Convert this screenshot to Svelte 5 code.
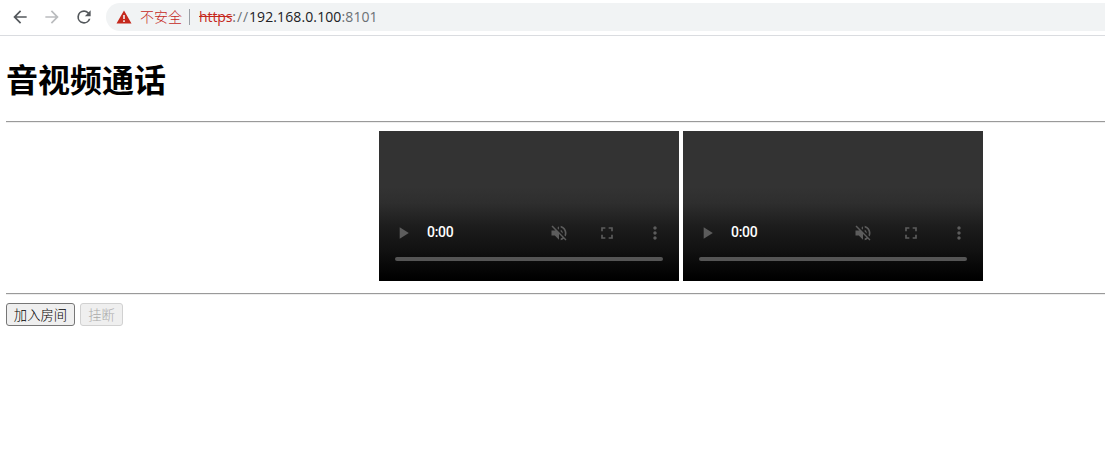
<script>
  const players = ['local', 'remote'];
</script>

<header class="toolbar">
  <nav>
    <svg viewBox="0 0 24 24"><path d="M20 11H7.83l5.59-5.59L12 4l-8 8 8 8 1.41-1.41L7.83 13H20v-2z" /></svg>
    <svg class="off" viewBox="0 0 24 24"><path d="M12 4l-1.41 1.41L16.17 11H4v2h12.17l-5.58 5.59L12 20l8-8z" /></svg>
    <svg viewBox="0 0 24 24"><path d="M17.65 6.35A7.96 7.96 0 0 0 12 4a8 8 0 1 0 7.73 10h-2.08A6 6 0 1 1 12 6c1.66 0 3.14.69 4.22 1.78L13 11h7V4l-2.35 2.35z" /></svg>
  </nav>
  <div class="omnibox">
    <svg class="warn" viewBox="0 0 16 14"><path fill-rule="evenodd" d="M8 .5L15.5 13.5H.5zM7.2 5v4h1.6V5zM7.2 10.2v1.7h1.6v-1.7z" /></svg>
    <span class="unsafe">不安全</span>
    <span class="divider"></span>
    <span class="url"><s>https</s><span class="dim sep">://</span>192.168.0.100<span class="dim">:8101</span></span>
  </div>
</header>

<main>
  <h1>音视频通话</h1>
  <hr />
  <section class="players">
    {#each players as player (player)}
      <div class="player">
        <div class="controls">
          <svg viewBox="0 0 24 24"><path d="M8 5v14l11-7z" /></svg>
          <span class="time">0:00</span>
          <svg viewBox="0 0 24 24"><path d="M16.5 12c0-1.77-1.02-3.29-2.5-4.03v2.21l2.45 2.45c.03-.2.05-.41.05-.63zm2.5 0c0 .94-.2 1.82-.54 2.64l1.51 1.51C20.63 14.91 21 13.5 21 12c0-4.28-2.99-7.86-7-8.77v2.06c2.89.86 5 3.54 5 6.71zM4.27 3L3 4.27 7.73 9H3v6h4l5 5v-6.73l4.25 4.25c-.67.52-1.42.93-2.25 1.18v2.06c1.38-.31 2.63-.95 3.69-1.81L19.73 21 21 19.73l-9-9L4.27 3zM12 4L9.91 6.09 12 8.18V4z" /></svg>
          <svg viewBox="0 0 24 24"><path d="M7 14H5v5h5v-2H7v-3zM5 10h2V7h3V5H5v5zm12 7h-3v2h5v-5h-2v3zM14 5v2h3v3h2V5h-5z" /></svg>
          <svg viewBox="0 0 24 24"><path d="M12 8c1.1 0 2-.9 2-2s-.9-2-2-2-2 .9-2 2 .9 2 2 2zm0 2c-1.1 0-2 .9-2 2s.9 2 2 2 2-.9 2-2-.9-2-2-2zm0 6c-1.1 0-2 .9-2 2s.9 2 2 2 2-.9 2-2-.9-2-2-2z" /></svg>
        </div>
        <div class="track"></div>
      </div>
    {/each}
  </section>
  <hr />
  <div class="actions">
    <button class="join">加入房间</button>
    <button class="hang" disabled>挂断</button>
  </div>
</main>

<style>
  :global(body) {
    background: #fff;
    overflow: hidden;
  }
  .toolbar {
    box-sizing: border-box;
    height: 36px;
    padding-top: 3px;
    border-bottom: 1px solid #dadce0;
    display: flex;
    align-items: flex-start;
    font-family: "Open Sans", "Noto Sans CJK SC", sans-serif;
    font-size: 14px;
  }
  nav {
    display: flex;
    gap: 12px;
    padding: 4px 12px 0 10px;
  }
  svg {
    display: block;
    flex: none;
    width: 20px;
    height: 20px;
    fill: #54585c;
  }
  nav .off {
    fill: #babcbe;
  }
  .omnibox {
    flex: 1;
    height: 28px;
    border-radius: 14px 0 0 14px;
    background: #f1f3f4;
    display: flex;
    align-items: center;
    padding-left: 10px;
    white-space: nowrap;
  }
  svg.warn {
    width: 16px;
    height: 14px;
    fill: #c5281c;
  }
  .unsafe {
    width: 42px;
    margin-left: 8px;
    line-height: 26px;
    padding-bottom: 2px;
    color: #c5281c;
    font-family: "Noto Sans CJK SC", sans-serif;
    font-weight: 300;
  }
  .divider {
    width: 1px;
    height: 16px;
    margin: 0 9px 0 7px;
    background: #9aa0a6;
  }
  .url {
    line-height: 28px;
    color: #202124;
    letter-spacing: 0.11px;
  }
  s {
    color: #c5281c;
    letter-spacing: -0.1px;
  }
  .dim {
    color: #6b7075;
  }
  .sep {
    letter-spacing: 0.9px;
  }
  main {
    padding-left: 6px;
    font-family: "Noto Sans CJK SC", sans-serif;
  }
  h1 {
    margin: 0;
    padding: 21px 0 22px;
    font-size: 32px;
    line-height: 42px;
    font-weight: 700;
    color: #000;
  }
  hr {
    height: 1px;
    margin: 0;
    border: 0;
    border-top: 1px solid #9a9a9a;
    background: #eee;
  }
  .players {
    display: flex;
    gap: 4px;
    padding: 8px 0 12px 373px;
  }
  .player {
    box-sizing: border-box;
    width: 300px;
    height: 150px;
    flex: none;
    padding: 92px 14px 0;
    background: linear-gradient(#333 0, #333 56px, #2e2e2e 72px, #1c1c1c 96px, #111 120px, #000 148px);
  }
  .controls {
    display: flex;
    align-items: center;
    height: 20px;
    gap: 28px;
  }
  .controls svg {
    fill: #5c5c5c;
  }
  .time {
    width: 94px;
    margin-left: -14px;
    padding-bottom: 2px;
    color: #fff;
    font: 500 14px/18px Roboto, sans-serif;
    letter-spacing: -0.3px;
  }
  .track {
    height: 4px;
    margin: 14px 2px 0;
    border-radius: 2px;
    background: #555;
  }
  .actions {
    display: flex;
    gap: 5px;
    padding-top: 8px;
  }
  button {
    box-sizing: border-box;
    height: 23px;
    margin: 0;
    padding: 0;
    border: 1px solid #767676;
    border-radius: 3px;
    background: #efefef;
    color: #000;
    font: 300 13.33px/21px "Noto Sans CJK SC", sans-serif;
    white-space: nowrap;
  }
  .join {
    width: 69px;
  }
  .hang {
    width: 43px;
    border-color: #d1d1d1;
    color: #aaa;
  }
</style>
